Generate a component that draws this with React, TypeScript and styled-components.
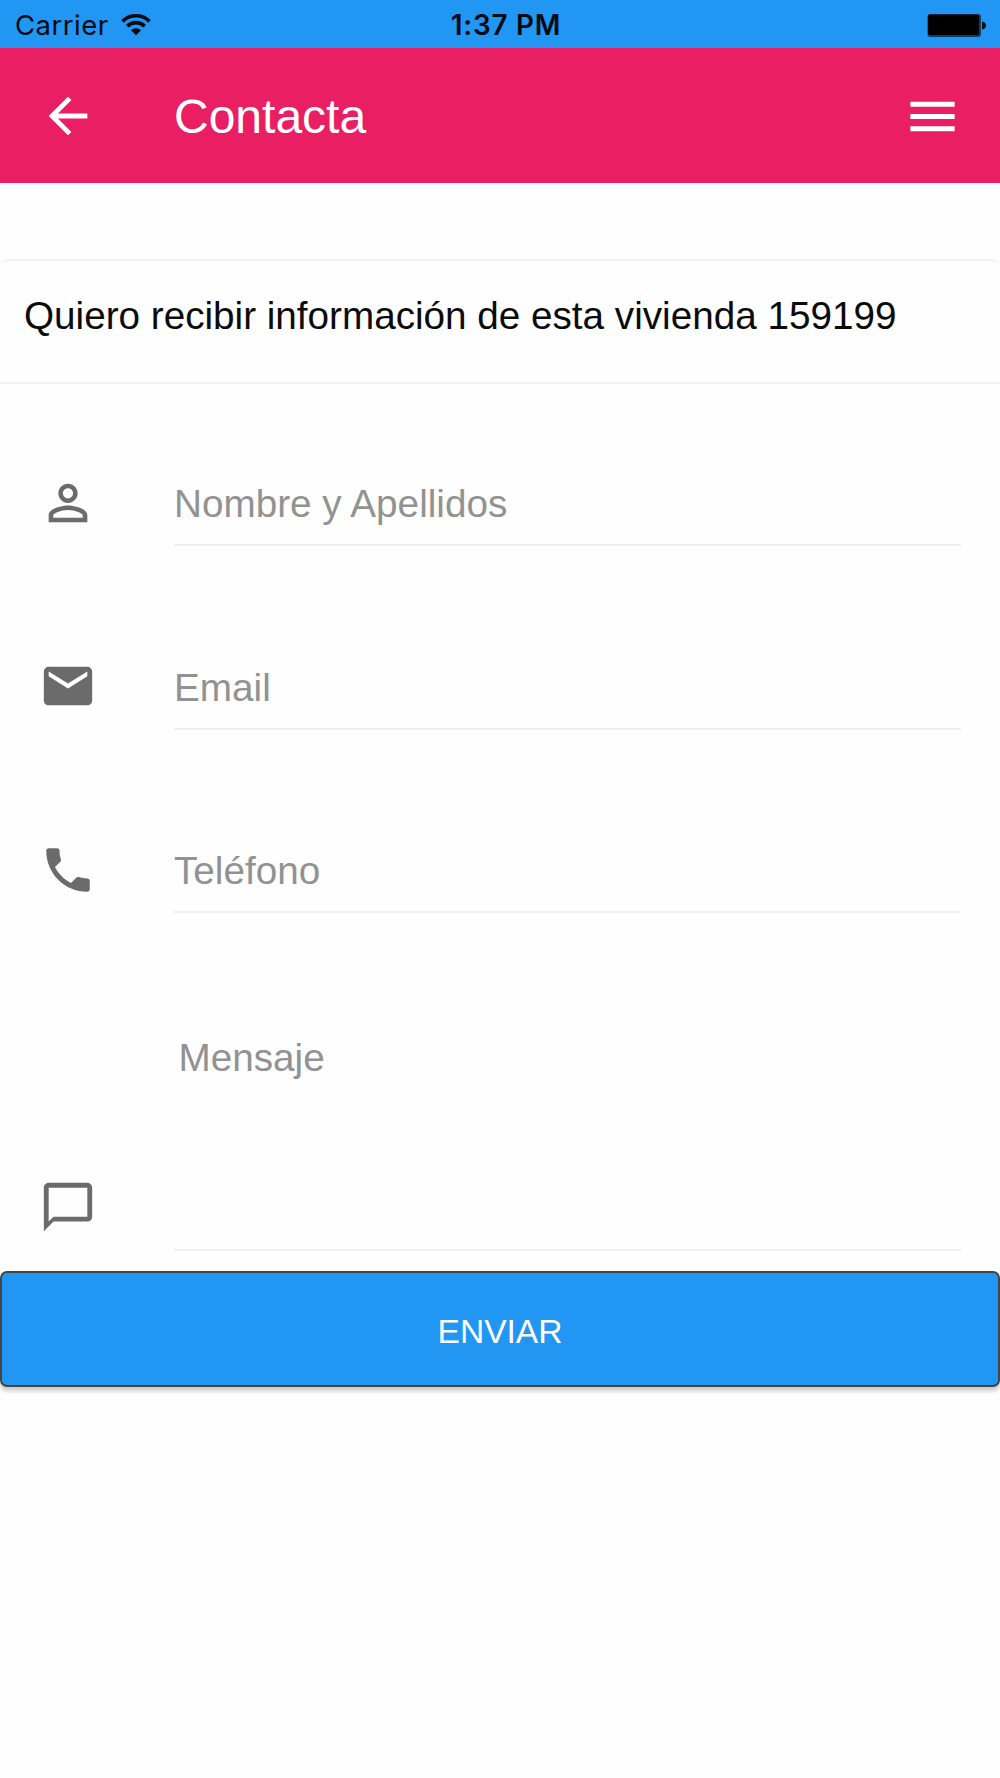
import React from "react";
import styled, { createGlobalStyle } from "styled-components";

const GlobalStyle = createGlobalStyle`
  *, *::before, *::after { box-sizing: border-box; }
  html, body { margin: 0; padding: 0; background: #fefefe; }
`;

const Screen = styled.main`
  width: 1000px;
  min-height: 1778px;
  background: #fefefe;
  font-family: "Liberation Sans", Arial, Helvetica, sans-serif;
  overflow: hidden;
`;

const StatusBar = styled.div`
  display: grid;
  grid-template-columns: 1fr auto 1fr;
  align-items: center;
  height: 48.4px;
  padding: 0 14px 0 15px;
  background: #2196f3;
  color: #050b12;
  font-family: Inter, "Liberation Sans", sans-serif;
  font-size: 27.5px;
  line-height: 48px;
`;

const Carrier = styled.div`
  display: flex;
  align-items: center;
  gap: 12px;
  letter-spacing: 0.5px;
`;

const CarrierName = styled.span`
  padding-top: 1px;
`;

const Clock = styled.div`
  padding: 1px 0 0 11px;
  font-weight: 600;
  font-size: 27.8px;
  letter-spacing: 0.8px;
`;

const BatterySlot = styled.div`
  display: flex;
  justify-content: flex-end;
`;

const AppBar = styled.header`
  display: flex;
  align-items: center;
  height: 134.6px;
  padding: 1px 38.5px 0 38.5px;
  background: #e91e63;
  color: #fff;
`;

const AppTitle = styled.h1`
  flex: 1;
  margin: 0 0 0 77.5px;
  padding-top: 2px;
  font-size: 48px;
  line-height: 56px;
  font-weight: 400;
`;

const IconButton = styled.button`
  display: flex;
  padding: 0;
  border: 0;
  background: none;
  color: inherit;
`;

const Glyph = styled.svg<{ $size: number }>`
  display: block;
  flex: none;
  width: ${(p) => p.$size}px;
  height: ${(p) => p.$size}px;
  fill: currentColor;
`;

const Card = styled.section`
  margin-top: 76px;
  border-top: 2px solid #f3f3f3;
  border-radius: 8px 8px 0 0;
`;

const CardTitle = styled.h2`
  margin: 0;
  padding: 1px 0 11.4px 24px;
  border-bottom: 2px solid #f0f0f0;
  font-size: 38.66px;
  line-height: 108.6px;
  font-weight: 400;
  color: #0b0b0b;
  white-space: nowrap;
`;

const Form = styled.form`
  display: flex;
  flex-direction: column;
  gap: 97.5px;
  padding-top: 76.2px;
`;

const Row = styled.label<{ $multiline?: boolean }>`
  display: flex;
  align-items: ${(p) => (p.$multiline ? "flex-end" : "center")};
  height: ${(p) => (p.$multiline ? 240.4 : 86)}px;
  padding: 0 39px 0 38.5px;
`;

const RowIcon = styled.span<{ $bottom?: number }>`
  width: 135.5px;
  padding-bottom: ${(p) => p.$bottom ?? 1}px;
  color: #6b6b6b;
`;

const Field = styled.span<{ $multiline?: boolean }>`
  flex: 1;
  align-self: stretch;
  padding: ${(p) => (p.$multiline ? "5px 0 0 4.5px" : "2px 0 0 0")};
  border-bottom: 2px solid #efefef;
  font-size: 38.7px;
  line-height: 84px;
  color: #929292;
`;

const Submit = styled.button`
  display: block;
  width: 100%;
  height: 116px;
  margin-top: 20px;
  padding: 5px 0 0;
  border: 2px solid #444;
  border-radius: 7px;
  background: #2196f3;
  box-shadow: 0 4px 4px rgba(0, 0, 0, 0.2);
  color: #fff;
  font-family: inherit;
  font-size: 33.6px;
  text-transform: uppercase;
`;

const paths = {
  back: "M20 11H7.83l5.59-5.59L12 4l-8 8 8 8 1.41-1.41L7.83 13H20v-2z",
  menu: "M3 18h18v-2H3v2zm0-5h18v-2H3v2zm0-7v2h18V6H3z",
  person:
    "M12 5.9c1.16 0 2.1.94 2.1 2.1s-.94 2.1-2.1 2.1S9.9 9.16 9.9 8s.94-2.1 2.1-2.1m0 9c2.97 0 6.1 1.46 6.1 2.1v1.1H5.9V17c0-.64 3.13-2.1 6.1-2.1M12 4C9.79 4 8 5.79 8 8s1.79 4 4 4 4-1.79 4-4-1.79-4-4-4zm0 9c-2.67 0-8 1.34-8 4v3h16v-3c0-2.66-5.33-4-8-4z",
  email:
    "M20 4H4c-1.1 0-1.99.9-1.99 2L2 18c0 1.1.9 2 2 2h16c1.1 0 2-.9 2-2V6c0-1.1-.9-2-2-2zm0 4l-8 5-8-5V6l8 5 8-5v2z",
  phone:
    "M6.62 10.79c1.44 2.83 3.76 5.14 6.59 6.59l2.2-2.2c.27-.27.67-.36 1.02-.24 1.12.37 2.33.57 3.57.57.55 0 1 .45 1 1V20c0 .55-.45 1-1 1-9.39 0-17-7.61-17-17 0-.55.45-1 1-1h3.5c.55 0 1 .45 1 1 0 1.25.2 2.45.57 3.57.11.35.03.74-.25 1.02l-2.2 2.2z",
  message:
    "M20 2H4c-1.1 0-2 .9-2 2v18l4-4h14c1.1 0 2-.9 2-2V4c0-1.1-.9-2-2-2zm0 14H6l-2 2V4h16v12z",
};

function Icon({ name, size = 58 }: { name: keyof typeof paths; size?: number }) {
  return (
    <Glyph $size={size} viewBox="0 0 24 24" aria-hidden>
      <path d={paths[name]} />
    </Glyph>
  );
}

function Wifi() {
  return (
    <svg width="30" height="22" viewBox="0 0 30 22" aria-hidden>
      <g fill="none" stroke="#050b12" strokeWidth="3.7">
        <path d="M1.5 7.4a19 19 0 0 1 27 0" />
        <path d="M6.3 12.3a12.3 12.3 0 0 1 17.4 0" />
      </g>
      <path d="M10 16.2a7.1 7.1 0 0 1 10 0l-5 5z" fill="#050b12" />
    </svg>
  );
}

function Battery() {
  return (
    <svg width="60" height="24" viewBox="0 0 60 24" aria-hidden>
      <rect x="1.5" y="1" width="53.5" height="23" rx="3" fill="#0a4068" />
      <rect x="2" y="1.5" width="51" height="20.5" rx="2" fill="#000" />
      <path d="M56 8.5c2.8.6 4 2 4 4s-1.2 3.4-4 4z" fill="#04101a" />
    </svg>
  );
}

const fields: { icon: keyof typeof paths; label: string }[] = [
  { icon: "person", label: "Nombre y Apellidos" },
  { icon: "email", label: "Email" },
  { icon: "phone", label: "Teléfono" },
];

export default function App() {
  return (
    <Screen>
      <GlobalStyle />
      <StatusBar>
        <Carrier>
          <CarrierName>Carrier</CarrierName>
          <Wifi />
        </Carrier>
        <Clock>1:37 PM</Clock>
        <BatterySlot>
          <Battery />
        </BatterySlot>
      </StatusBar>
      <AppBar>
        <IconButton aria-label="Atrás">
          <Icon name="back" />
        </IconButton>
        <AppTitle>Contacta</AppTitle>
        <IconButton aria-label="Menú">
          <Icon name="menu" size={59} />
        </IconButton>
      </AppBar>
      <Card>
        <CardTitle>Quiero recibir información de esta vivienda 159199</CardTitle>
        <Form>
          {fields.map((f) => (
            <Row key={f.icon}>
              <RowIcon>
                <Icon name={f.icon} />
              </RowIcon>
              <Field>{f.label}</Field>
            </Row>
          ))}
          <Row $multiline>
            <RowIcon $bottom={14.8}>
              <Icon name="message" />
            </RowIcon>
            <Field $multiline>Mensaje</Field>
          </Row>
        </Form>
        <Submit type="button">Enviar</Submit>
      </Card>
    </Screen>
  );
}
